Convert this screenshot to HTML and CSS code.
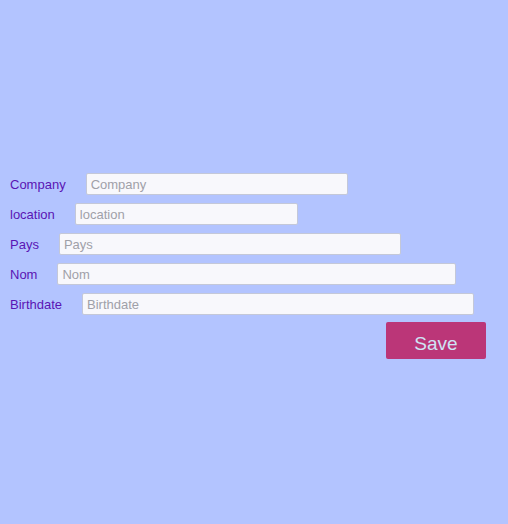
FILE: index.html
```html
<!DOCTYPE html>
<html>
<head>
<meta charset="utf-8">
<link rel="stylesheet" href="styles.css">
</head>
<body>
<form class="form">
  <div class="row"><label class="label">Company</label><input class="field w-company" placeholder="Company"></div>
  <div class="row"><label class="label">location</label><input class="field w-location" placeholder="location"></div>
  <div class="row"><label class="label">Pays</label><input class="field w-pays" placeholder="Pays"></div>
  <div class="row"><label class="label">Nom</label><input class="field w-nom" placeholder="Nom"></div>
  <div class="row"><label class="label">Birthdate</label><input class="field w-birth" placeholder="Birthdate"></div>
  <div class="actions"><button type="button" class="save">Save</button></div>
</form>
</body>
</html>
```
FILE: styles.css
```css
html, body {
  margin: 0;
  padding: 0;
  background: #b3c4ff;
  height: 100%;
}
.form {
  padding: 173px 22px 0 10px;
  display: flex;
  flex-direction: column;
  gap: 8px;
  font-family: "Liberation Sans", Arial, sans-serif;
}
.row {
  display: flex;
  align-items: center;
  gap: 20px;
  height: 22px;
}
.label {
  font-size: 13px;
  color: #5a14b4;
  padding-top: 1px;
}
.field {
  box-sizing: border-box;
  height: 22px;
  border: 1px solid #c4c8d8;
  border-radius: 2px;
  background: #f8f8fc;
  padding: 1px 4px 0;
  font-family: "Liberation Sans", Arial, sans-serif;
  font-size: 13px;
  color: #333;
  outline: none;
}
.field::placeholder { color: #a0a0a8; }
.w-company { width: 262px; }
.w-location { width: 223px; }
.w-pays { width: 342px; }
.w-nom { width: 399px; }
.w-birth { width: 392px; }
.actions {
  display: flex;
  justify-content: flex-end;
  margin-top: -1px;
}
.save {
  width: 100px;
  height: 37px;
  border: none;
  border-radius: 2px;
  background: #bb3678;
  color: #cfe3f5;
  font-family: "Liberation Sans", Arial, sans-serif;
  font-size: 19px;
  padding: 6px 0 0;
}
```
